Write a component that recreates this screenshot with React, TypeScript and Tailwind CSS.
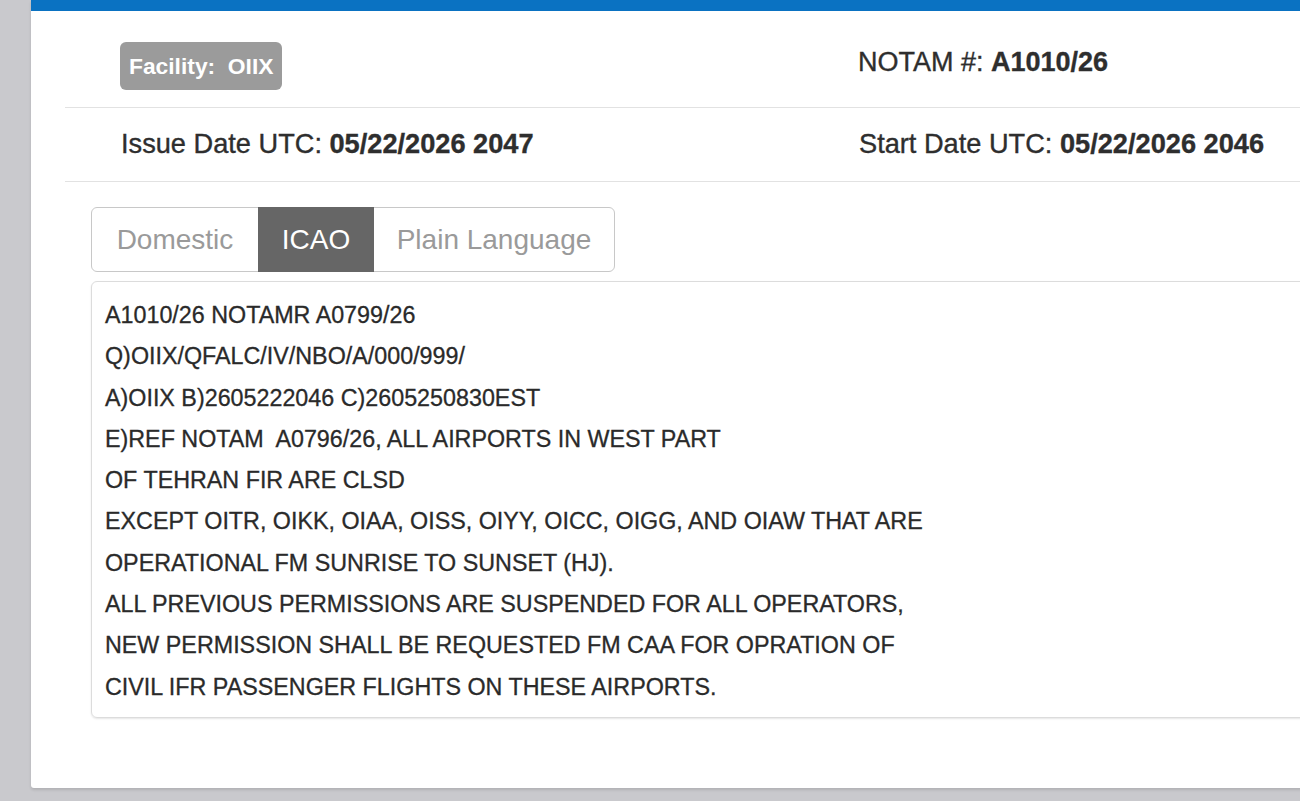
import { useState } from 'react'

const notamLines = [
  'A1010/26 NOTAMR A0799/26',
  'Q)OIIX/QFALC/IV/NBO/A/000/999/',
  'A)OIIX B)2605222046 C)2605250830EST',
  'E)REF NOTAM  A0796/26, ALL AIRPORTS IN WEST PART',
  'OF TEHRAN FIR ARE CLSD',
  'EXCEPT OITR, OIKK, OIAA, OISS, OIYY, OICC, OIGG, AND OIAW THAT ARE',
  'OPERATIONAL FM SUNRISE TO SUNSET (HJ).',
  'ALL PREVIOUS PERMISSIONS ARE SUSPENDED FOR ALL OPERATORS,',
  'NEW PERMISSION SHALL BE REQUESTED FM CAA FOR OPRATION OF',
  'CIVIL IFR PASSENGER FLIGHTS ON THESE AIRPORTS.',
]

const tabs = [
  { id: 'domestic', label: 'Domestic', width: 'w-[166px]' },
  { id: 'icao', label: 'ICAO', width: 'w-[116px]' },
  { id: 'plain', label: 'Plain Language', width: 'w-[240px]' },
]

export default function App() {
  const [activeTab, setActiveTab] = useState('icao')

  return (
    <div className="w-[1300px] h-[801px] overflow-hidden bg-[#c9c9cd] pl-[31px] pb-[13px] font-['Liberation_Sans',Arial,sans-serif]">
      <div className="h-full w-[1300px] bg-white rounded-bl-[3px] shadow-[0_2px_3px_rgba(0,0,0,0.12)]">
        {/* Top accent bar */}
        <div className="h-[11px] bg-[#0a72c2]" />

        <div className="ml-[34px]">
          {/* Facility / NOTAM number */}
          <div className="flex items-center pl-[55px] pt-[31px] pb-[17px] border-b border-[#e2e2e2]">
            <div className="w-[738px]">
              <span className="inline-flex items-center h-[48px] px-[9px] rounded-[6px] bg-[#9b9b9b] text-white font-bold text-[22.8px]">
                Facility:&nbsp; OIIX
              </span>
            </div>
            <div className="-mt-[8px] text-[27px] text-[#2e2e2e] [-webkit-text-stroke:0.35px_#2e2e2e]">
              NOTAM #: <span className="font-bold">A1010/26</span>
            </div>
          </div>

          {/* Dates */}
          <div className="flex items-center h-[74px] pl-[56px] border-b border-[#e2e2e2] text-[27.2px] text-[#2e2e2e] [-webkit-text-stroke:0.35px_#2e2e2e]">
            <div className="w-[738px]">
              Issue Date UTC: <span className="font-bold">05/22/2026 2047</span>
            </div>
            <div>
              Start Date UTC: <span className="font-bold">05/22/2026 2046</span>
            </div>
          </div>

          {/* Format tabs */}
          <div className="ml-[26px] mt-[25px] flex h-[65px] w-fit rounded-[6px] border border-[#c8c8c8]">
            {tabs.map((tab) => (
              <button
                key={tab.id}
                onClick={() => setActiveTab(tab.id)}
                className={
                  activeTab === tab.id
                    ? `${tab.width} -my-px bg-[#666666] text-white text-[28px]`
                    : `${tab.width} text-[#9a9a9a] text-[28px] first:rounded-l-[6px] last:rounded-r-[6px]`
                }
              >
                {tab.label}
              </button>
            ))}
          </div>

          {/* NOTAM text */}
          <div className="ml-[26px] mt-[9px] h-[437px] rounded-[6px] border border-[#dcdcdc] shadow-[0_1px_2px_rgba(0,0,0,0.1)] pl-[13px] pt-[13px]">
            {notamLines.map((line, i) => (
              <p
                key={i}
                className="whitespace-pre text-[23.3px] leading-[41.3px] text-[#2a2a2a] [-webkit-text-stroke:0.3px_#2a2a2a]"
              >
                {line}
              </p>
            ))}
          </div>
        </div>
      </div>
    </div>
  )
}
